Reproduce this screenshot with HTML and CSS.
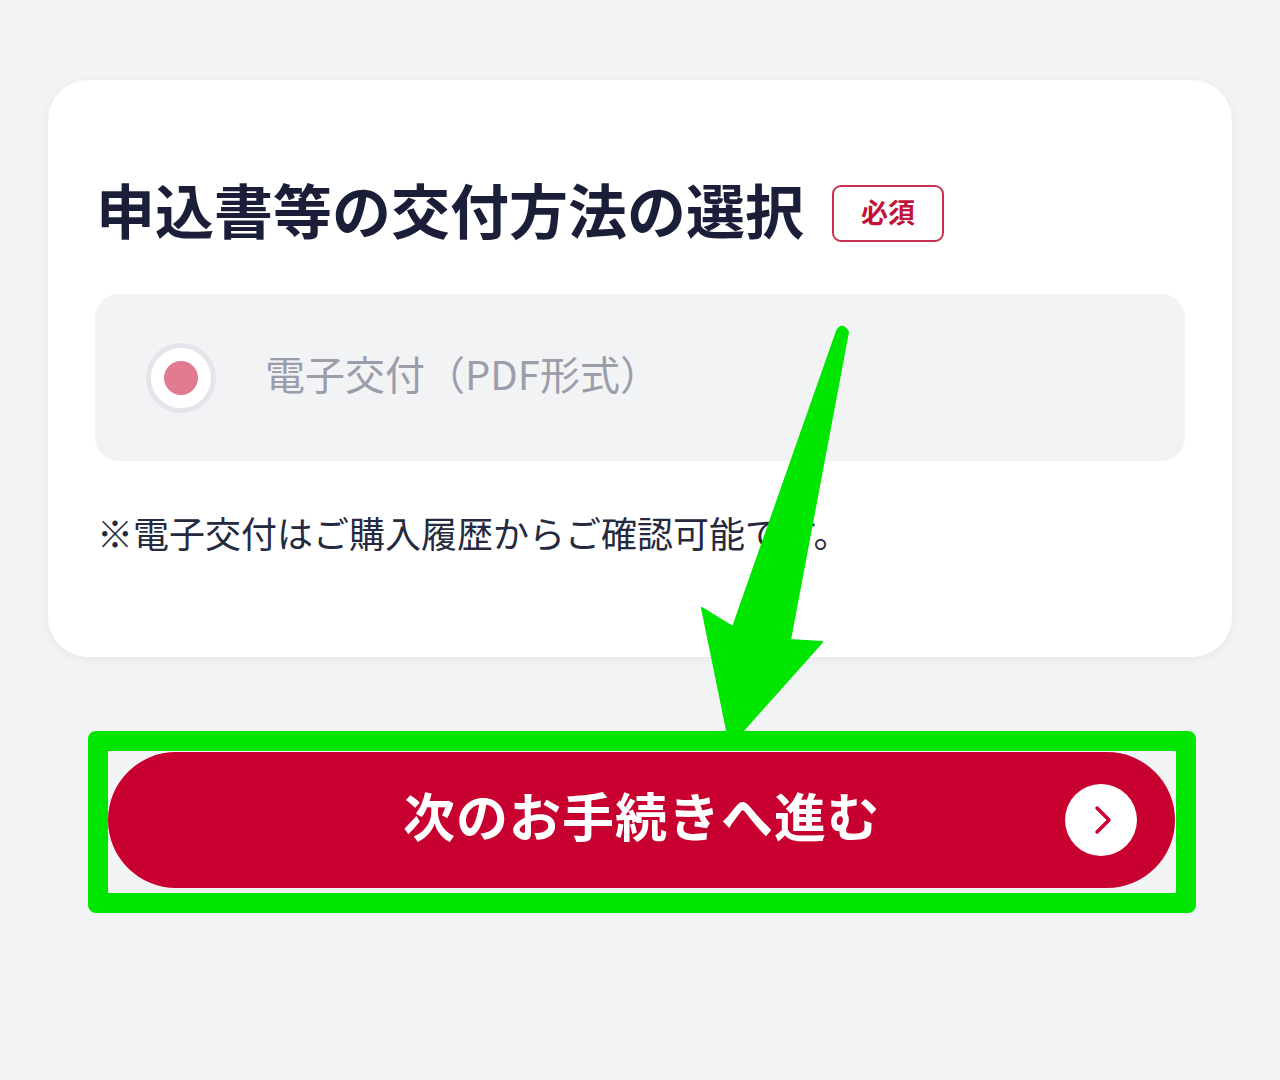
FILE: index.html
```html
<!DOCTYPE html>
<html lang="ja">
<head>
    <meta charset="UTF-8">
    <meta name="viewport" content="width=device-width, initial-scale=1.0">
    <title>申込書等の交付方法の選択</title>
    <link rel="stylesheet" href="styles.css">
</head>
<body>

<div class="page">
    <div class="card">
        <div class="card-head">
            <h1 class="card-title">申込書等の交付方法の選択</h1>
            <span class="badge">必須</span>
        </div>

        <label class="option">
            <span class="radio"><span class="radio-dot"></span></span>
            <span class="option-label">電子交付（PDF形式）</span>
        </label>

        <p class="note">※電子交付はご購入履歴からご確認可能です。</p>
    </div>

    <div class="highlight">
        <button class="next-button">
            <span class="next-text">次のお手続きへ進む</span>
            <span class="next-icon">
                <svg width="20" height="30" viewBox="0 0 20 30">
                    <path d="M4 3 L16 15 L4 27" fill="none" stroke="#c8002f" stroke-width="3.5" stroke-linecap="round" stroke-linejoin="round"/>
                </svg>
            </span>
        </button>
    </div>
</div>

<!-- annotation arrow -->
<svg class="arrow" width="1280" height="1080" viewBox="0 0 1280 1080">
    <path d="M837 331 Q842 322 848 332 L790 640 L822 642 L730 745 L702 608 L733 627 Z" fill="#00e600" stroke="#00e600" stroke-width="2" stroke-linejoin="round"/>
</svg>

</body>
</html>
```

FILE: styles.css
```css
body {
    margin: 0;
    background-color: #f2f3f5;
    font-family: "Noto Sans CJK JP", "Noto Sans", sans-serif;
    color: #1b1e38;
    position: relative;
    height: 1080px;
    overflow: hidden;
}

.page {
    padding: 80px 48px 0 48px;
}

.card {
    background: #ffffff;
    border-radius: 40px;
    padding: 93px 47px 98px 47px;
    box-shadow: 0 2px 8px rgba(0, 0, 0, 0.06);
}

.card-head {
    display: flex;
    align-items: center;
    gap: 28px;
    margin-left: 1px;
    height: 71px;
}

.card-title {
    margin: 0;
    font-size: 59px;
    font-weight: 700;
    line-height: 71px;
    color: #1b1e38;
}

.badge {
    display: inline-flex;
    align-items: center;
    justify-content: center;
    width: 112px;
    height: 57px;
    border: 2.5px solid #c7304f;
    border-radius: 9px;
    box-sizing: border-box;
    color: #c0143c;
    font-size: 27px;
    font-weight: 700;
    margin-top: 9px;
    padding-bottom: 3px;
}

.option {
    display: flex;
    align-items: center;
    height: 167px;
    margin-top: 50px;
    padding-left: 51px;
    background: #f2f3f5;
    border-radius: 24px;
    box-sizing: border-box;
}

.radio {
    width: 70px;
    height: 70px;
    border-radius: 50%;
    background: #ffffff;
    border: 5px solid #e4e5ea;
    box-sizing: border-box;
    display: flex;
    align-items: center;
    justify-content: center;
}

.radio-dot {
    width: 34px;
    height: 34px;
    border-radius: 50%;
    background: #e27a92;
}

.option-label {
    margin-left: 49px;
    font-size: 40px;
    color: #9b9dab;
    padding-bottom: 9px;
}

.note {
    margin: 44px 0 0 2px;
    font-size: 36px;
    line-height: 54px;
    color: #262a40;
}

/* ボタン周りの緑枠 */
.highlight {
    margin: 74px 36px 0 40px;
    border: 20px solid #00e600;
    border-radius: 8px;
    padding: 1px 1px 5px 0;
}

.next-button {
    position: relative;
    display: flex;
    align-items: center;
    justify-content: center;
    width: 100%;
    height: 136px;
    border: none;
    border-radius: 68px;
    background-color: #c8002f;
    color: #ffffff;
    font-family: "Noto Sans CJK JP", "Noto Sans", sans-serif;
    cursor: pointer;
}

.next-text {
    font-size: 52px;
    font-weight: 700;
    letter-spacing: 1px;
    padding-bottom: 12px;
}

.next-icon {
    position: absolute;
    right: 38px;
    top: 50%;
    transform: translateY(-50%);
    width: 72px;
    height: 72px;
    border-radius: 50%;
    background: #ffffff;
    display: flex;
    align-items: center;
    justify-content: center;
}

.next-icon svg {
    margin-left: 4px;
}

.arrow {
    position: absolute;
    top: 0;
    left: 0;
    pointer-events: none;
}
```
